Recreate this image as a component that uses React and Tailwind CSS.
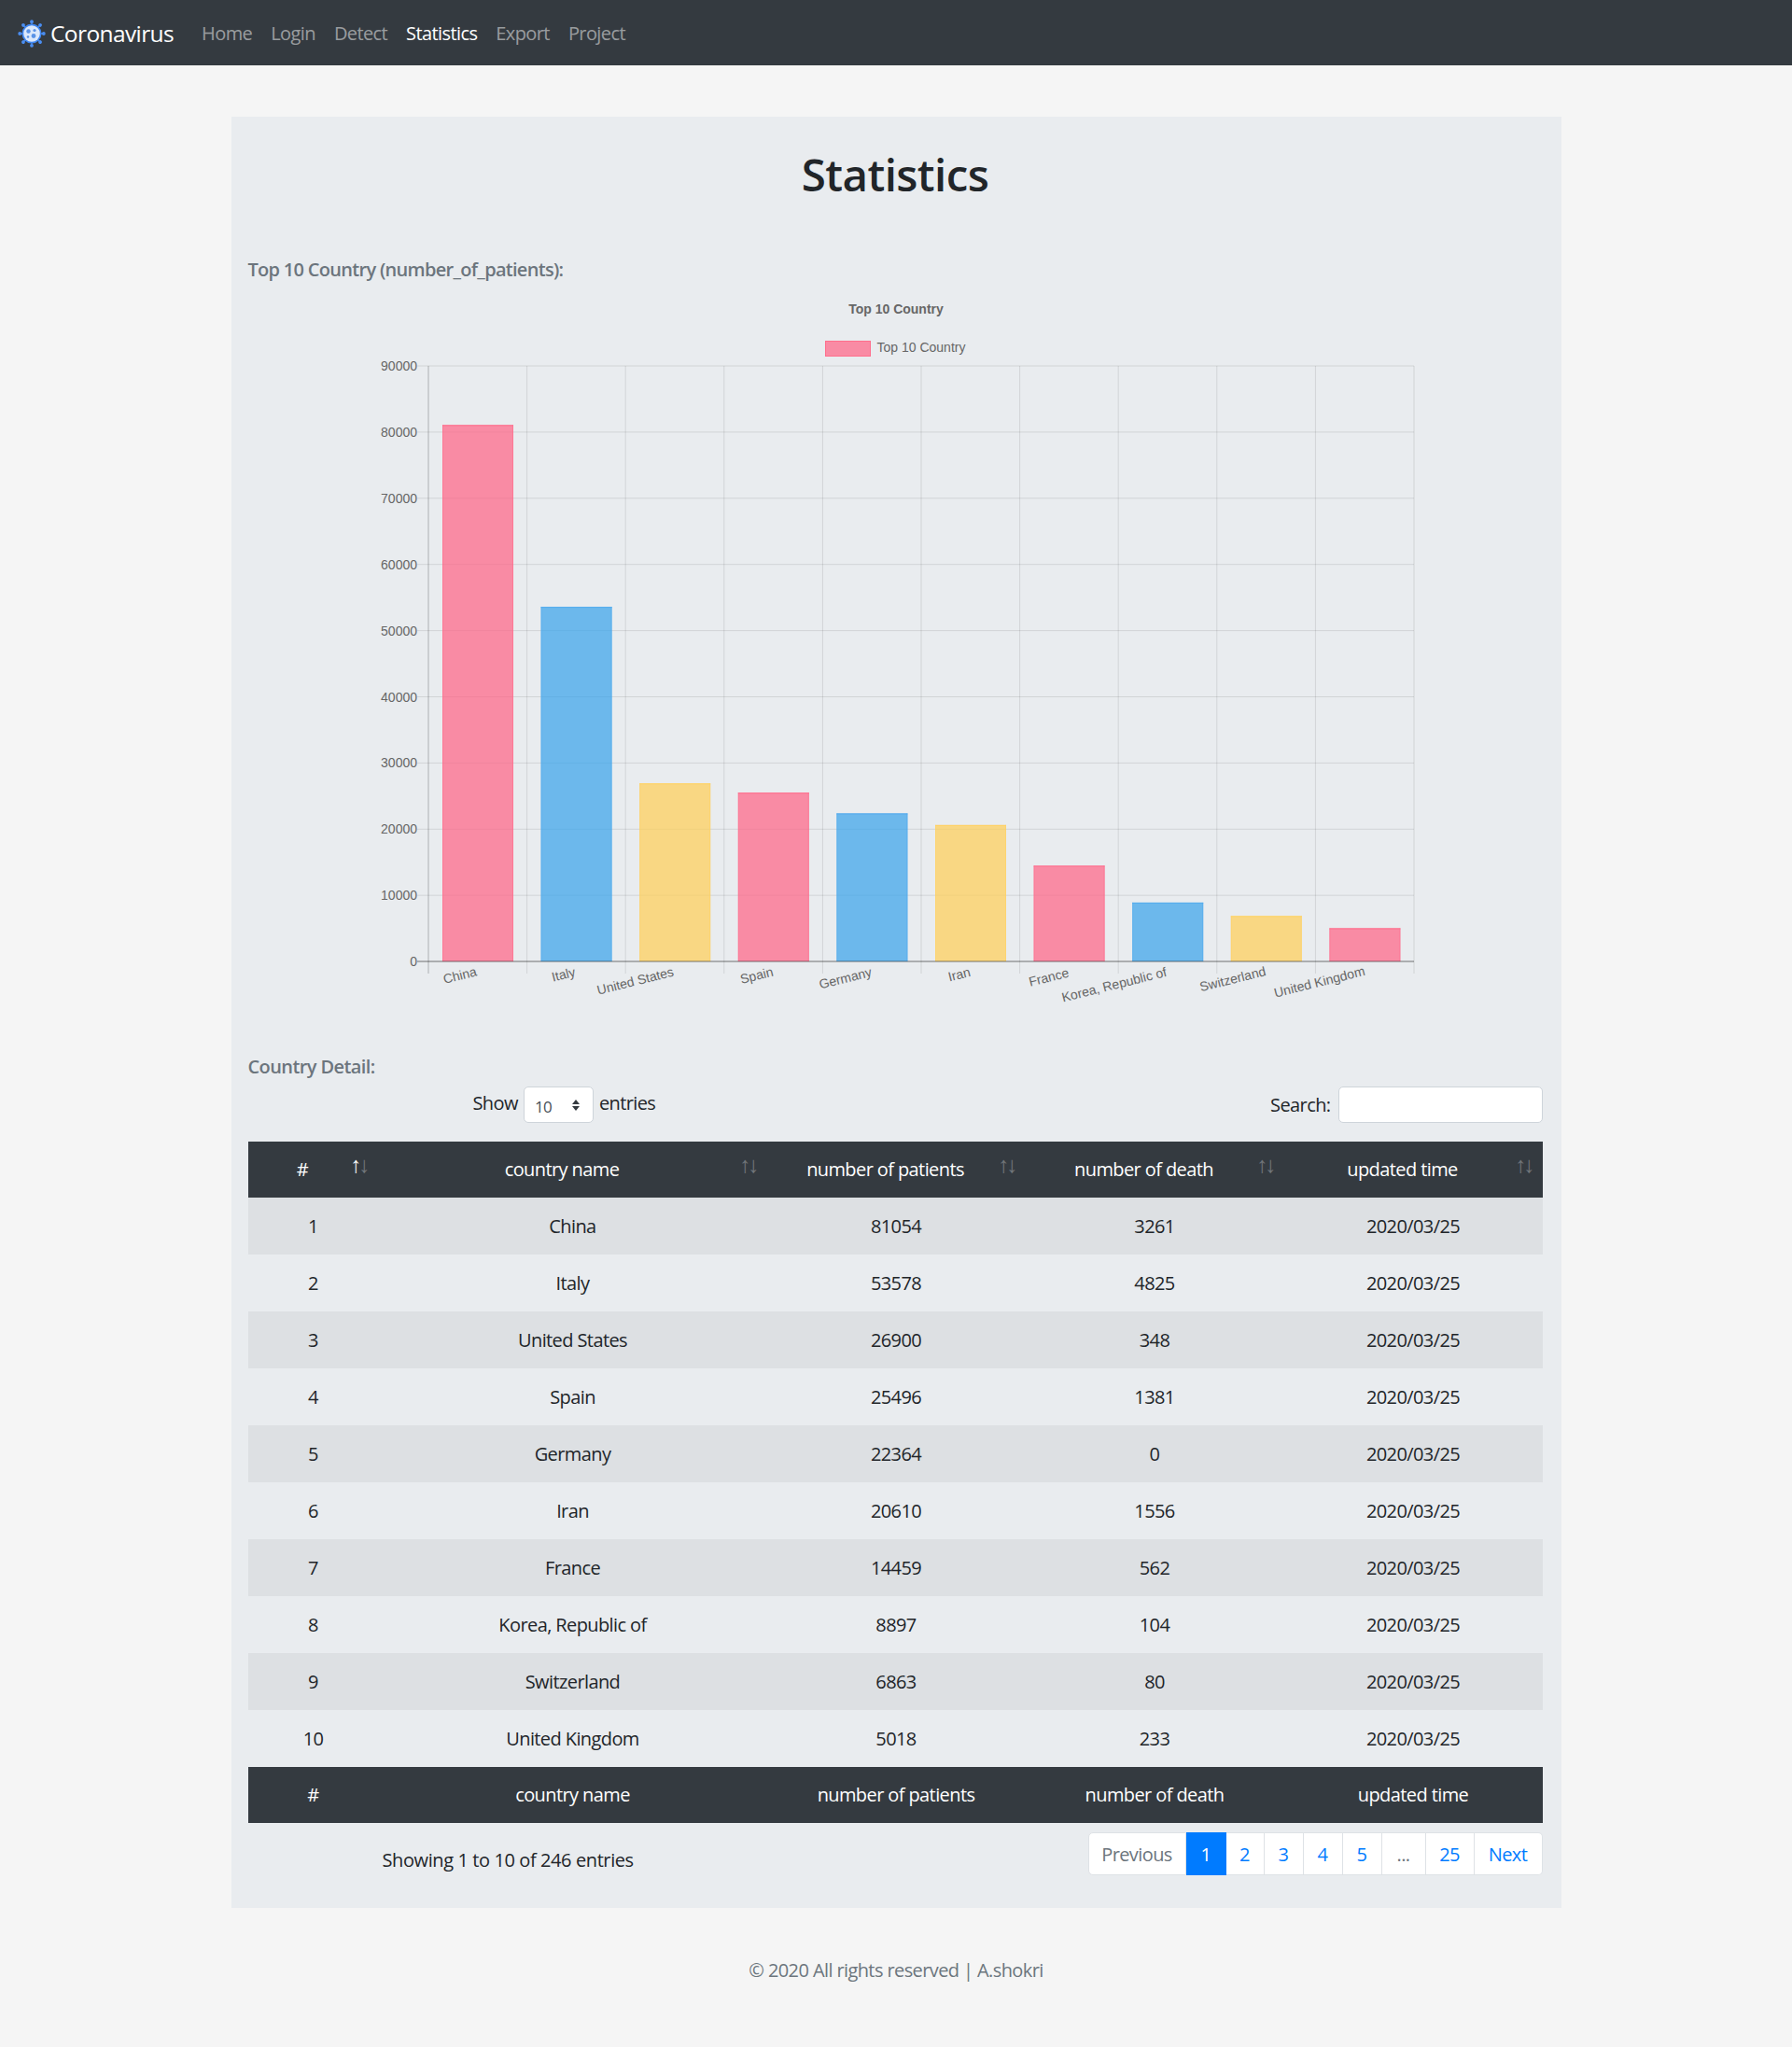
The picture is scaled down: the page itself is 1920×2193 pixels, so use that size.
const NAV_LINKS = ["Home", "Login", "Detect", "Statistics", "Export", "Project"];

const COUNTRIES = [
  { name: "China", patients: 81054, death: 3261 },
  { name: "Italy", patients: 53578, death: 4825 },
  { name: "United States", patients: 26900, death: 348 },
  { name: "Spain", patients: 25496, death: 1381 },
  { name: "Germany", patients: 22364, death: 0 },
  { name: "Iran", patients: 20610, death: 1556 },
  { name: "France", patients: 14459, death: 562 },
  { name: "Korea, Republic of", patients: 8897, death: 104 },
  { name: "Switzerland", patients: 6863, death: 80 },
  { name: "United Kingdom", patients: 5018, death: 233 },
];

const HEADERS = ["#", "country name", "number of patients", "number of death", "updated time"];

const BAR_COLORS = [
  { fill: "rgba(255,99,132,0.7)", stroke: "rgb(255,110,140)" },
  { fill: "rgba(54,162,235,0.7)", stroke: "rgb(84,172,238)" },
  { fill: "rgba(255,206,86,0.7)", stroke: "rgb(255,210,100)" },
];

// centre of each rotated x axis label
const X_LABELS = [
  [493, 1046], [604, 1045], [681, 1052], [811, 1046], [906, 1049],
  [1028, 1045], [1124, 1048], [1194, 1056], [1321, 1050], [1414, 1053],
];

const PAGES = [
  { label: "Previous", w: "w-[105px]", color: "text-[#6c757d]", rounded: "rounded-l-[5px] border-l" },
  { label: "1", w: "w-[43px]", active: true },
  { label: "2", w: "w-[41px]", color: "text-[#007bff]" },
  { label: "3", w: "w-[42px]", color: "text-[#007bff]" },
  { label: "4", w: "w-[42px]", color: "text-[#007bff]" },
  { label: "5", w: "w-[42px]", color: "text-[#007bff]" },
  { label: "...", w: "w-[47px]", color: "text-[#6c757d]" },
  { label: "25", w: "w-[52px]", color: "text-[#007bff]" },
  { label: "Next", w: "w-[73px]", color: "text-[#007bff]", rounded: "rounded-r-[5px]" },
];

const AXIS_X = 459;
const AXIS_W = 105.6;
const ZERO_Y = 1030;
const TOP_Y = 392;
const STEP_Y = 70.9;

function VirusLogo() {
  const spikes = [0, 45, 90, 135, 180, 225, 270, 315];
  return (
    <svg width="30" height="30" viewBox="0 0 30 30" className="shrink-0">
      {spikes.map((a) => (
        <g key={a} transform={`rotate(${a} 15 15)`}>
          <line x1="15" y1="5" x2="15" y2="2" stroke="#4a8df0" strokeWidth="1.4" />
          <circle cx="15" cy="2.2" r="1.9" fill="#4a8df0" />
        </g>
      ))}
      <circle cx="15" cy="15" r="10.5" fill="#3f86f0" />
      <circle cx="15" cy="15" r="8.8" fill="#dbe8fb" />
      <circle cx="11.5" cy="12.5" r="2.2" fill="#5b93e6" />
      <circle cx="18" cy="11.5" r="1.6" fill="#5b93e6" />
      <circle cx="17" cy="17.5" r="2.4" fill="#5b93e6" />
      <circle cx="11" cy="18.5" r="1.3" fill="#5b93e6" />
    </svg>
  );
}

function Chart() {
  return (
    <svg viewBox="266 310 1387 810" className="block w-[1387px] h-[810px] tracking-normal" fontFamily="'Liberation Sans', Arial, sans-serif">
      <text x="960" y="336" textAnchor="middle" fontSize="14" fontWeight="700" fill="#666">Top 10 Country</text>
      <rect x="884.5" y="365.5" width="48" height="16" fill="rgba(255,99,132,0.7)" stroke="rgb(255,110,140)" />
      <text x="939.5" y="377" fontSize="14" fill="#666">Top 10 Country</text>

      {Array.from({ length: 10 }, (_, i) => (
        <g key={i}>
          <line x1="447" x2="1515" y1={TOP_Y + i * STEP_Y} y2={TOP_Y + i * STEP_Y} stroke="rgba(0,0,0,0.1)" />
          <text x="447" y={TOP_Y + i * STEP_Y + 5} textAnchor="end" fontSize="14" fill="#666">{(9 - i) * 10000 || 0}</text>
        </g>
      ))}
      {Array.from({ length: 11 }, (_, i) => (
        <line key={i} x1={AXIS_X + i * AXIS_W} x2={AXIS_X + i * AXIS_W} y1={TOP_Y} y2="1043" stroke={i === 0 ? "rgba(0,0,0,0.25)" : "rgba(0,0,0,0.1)"} />
      ))}

      {COUNTRIES.map(({ name, patients }, i) => {
        const h = (patients * STEP_Y) / 10000;
        const c = BAR_COLORS[i % 3];
        const x = AXIS_X + i * AXIS_W + 15;
        return (
          <g key={name}>
            <rect x={x} y={ZERO_Y - h} width="76" height={h} fill={c.fill} />
            <line x1={x} x2={x + 76} y1={ZERO_Y - h + 0.5} y2={ZERO_Y - h + 0.5} stroke={c.stroke} />
            <line x1={x + 0.5} x2={x + 0.5} y1={ZERO_Y - h} y2={ZERO_Y} stroke={c.stroke} strokeOpacity="0.6" />
            <line x1={x + 75.5} x2={x + 75.5} y1={ZERO_Y - h} y2={ZERO_Y} stroke={c.stroke} strokeOpacity="0.6" />
            <text
              x={X_LABELS[i][0]}
              y={X_LABELS[i][1]}
              textAnchor="middle"
              dominantBaseline="middle"
              fontSize="14"
              fill="#666"
              transform={`rotate(-14 ${X_LABELS[i][0]} ${X_LABELS[i][1]})`}
            >
              {name}
            </text>
          </g>
        );
      })}
      <line x1="447" x2="1515" y1={ZERO_Y} y2={ZERO_Y} stroke="rgba(0,0,0,0.3)" strokeWidth="1.5" />
    </svg>
  );
}

function SortArrows({ active }) {
  return (
    <span className={`absolute top-[10px] flex text-[24px] leading-[30px] font-['Liberation_Sans',sans-serif] tracking-[-3px] ${active ? "right-[12px]" : "right-[11px]"}`}>
      <span className={active ? "opacity-100" : "opacity-30"}>↑</span>
      <span className="opacity-30">↓</span>
    </span>
  );
}

export default function App() {
  return (
    <div className="min-h-[2193px] bg-[#f5f5f5] text-[20px] leading-[30px] text-[#212529] font-['Open_Sans',sans-serif] tracking-[-0.6px]">
      {/* NAVBAR */}
      <nav className="h-[70px] bg-[#343a40] flex items-center pl-[19px] pt-[2px]">
        <a href="#" className="flex items-center gap-[5px] text-white text-[24.5px] mr-[30px]">
          <VirusLogo />
          <span>Coronavirus</span>
        </a>
        <div className="flex gap-[20px]">
          {NAV_LINKS.map((link) => (
            <a key={link} href="#" className={link === "Statistics" ? "text-white" : "text-[#ffffff80]"}>{link}</a>
          ))}
        </div>
      </nav>

      {/* CARD */}
      <main className="w-[1425px] mx-auto mt-[55px] bg-[#e9ecef] pl-[18px] pr-[20px] pt-[30px] pb-[35px]">
        <h1 className="text-center text-[47.5px] leading-[64px] font-semibold">Statistics</h1>

        <h6 className="mt-[55px] text-[#6c757d] font-semibold tracking-[-0.7px]">Top 10 Country (number_of_patients):</h6>
        <div className="mt-[6px]">
          <Chart />
        </div>

        <h6 className="mt-[8px] text-[#6c757d] font-semibold">Country Detail:</h6>

        <div className="mt-[6px] flex justify-between items-start">
          <label className="ml-[241px] flex items-center gap-[6px] h-[36px]">
            Show
            <span className="relative block">
              <select className="block w-[75px] h-[39px] appearance-none bg-white border border-[#ced4da] rounded-[5px] pl-[11px] pt-[4px] text-[17px] text-[#495057] mt-[3px]">
                <option>10</option>
              </select>
              <svg className="absolute top-[16px] right-[14px]" width="10" height="14" viewBox="0 0 10 14">
                <path d="M5 1 9 6H1zM5 13 1 8h8z" fill="#343a40" />
              </svg>
            </span>
            entries
          </label>
          <label className="flex items-center gap-[8px]">
            Search:
            <input className="block w-[219px] h-[39px] bg-white border border-[#ced4da] rounded-[5px]" />
          </label>
        </div>

        <table className="mt-[20px] w-[1387px] table-fixed border-collapse text-center">
          <colgroup>
            <col className="w-[140px]" />
            <col className="w-[416px]" />
            <col className="w-[277px]" />
            <col className="w-[277px]" />
            <col className="w-[277px]" />
          </colgroup>
          <thead className="bg-[#343a40] text-white">
            <tr className="h-[60px]">
              {HEADERS.map((h, i) => (
                <th key={h} className="relative font-normal pl-[15px] pr-[38px]">
                  {h}
                  <SortArrows active={i === 0} />
                </th>
              ))}
            </tr>
          </thead>
          <tbody>
            {COUNTRIES.map(({ name, patients, death }, i) => (
              <tr key={name} className={`h-[61px] ${i % 2 === 0 ? "bg-[#dde0e3]" : ""}`}>
                <td>{i + 1}</td>
                <td>{name}</td>
                <td>{patients}</td>
                <td>{death}</td>
                <td>2020/03/25</td>
              </tr>
            ))}
          </tbody>
          <tfoot className="bg-[#343a40] text-white">
            <tr className="h-[60px]">
              {HEADERS.map((h) => (
                <th key={h} className="font-normal">{h}</th>
              ))}
            </tr>
          </tfoot>
        </table>

        <div className="mt-[10px] flex justify-between items-start">
          <div className="ml-[144px] mt-[15px] tracking-[-0.4px]">Showing 1 to 10 of 246 entries</div>
          <ul className="flex h-[46px]">
            {PAGES.map(({ label, w, color, rounded, active }) => (
              <li
                key={label}
                className={`${w} flex items-center justify-center pt-[1px] ${rounded || ""} ${active ? "bg-[#007bff] text-white" : `bg-white border-y border-r border-[#dee2e6] ${color}`}`}
              >
                {label}
              </li>
            ))}
          </ul>
        </div>
      </main>

      {/* FOOTER */}
      <footer className="mt-[52px] text-center text-[#6c757d]">© 2020 All rights reserved | A.shokri</footer>
    </div>
  );
}
